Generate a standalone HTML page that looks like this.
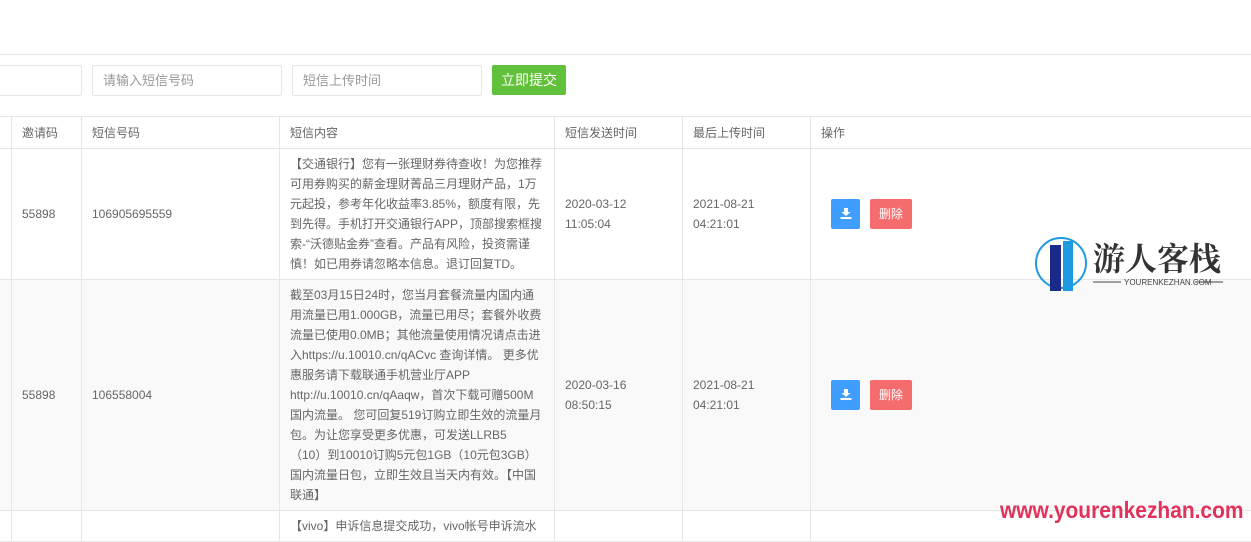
<!DOCTYPE html>
<html><head><meta charset="utf-8"><style>
body{margin:0;width:1251px;height:527px;overflow:hidden;background:#fff;font-family:"Liberation Sans","Noto Sans CJK SC",sans-serif;font-size:12px;color:#666;position:relative}
.top{position:absolute;left:0;top:54px;width:1251px;border-top:1px solid #e6e6e6}
.in{position:absolute;top:65px;border:1px solid #e6e6e6;border-radius:2px;box-sizing:border-box;height:31px;line-height:29px;padding-left:10px;color:#999;font-size:13px}
.btn{position:absolute;left:492px;top:65px;width:74px;height:30px;background:#62c13a;color:#fff;border-radius:2px;text-align:center;line-height:30px;font-size:14px}
table{position:absolute;left:-1px;top:116px;border-collapse:collapse;table-layout:fixed;width:1263px}
td{border:1px solid #e6e6e6;padding:0 10px;line-height:20px;vertical-align:middle;overflow-wrap:break-word}
td.f{padding:0}
td.c{padding:5px 8px 5px 10px}
td.n{white-space:nowrap}
tr.h td{height:31px}
tr.g td{background:#f9f9f9}
.b{display:inline-block;height:30px;border-radius:2px;color:#fff;text-align:center;line-height:30px;vertical-align:middle}
.dl{width:29px;background:#409eff;margin-left:10px}
.del{width:42px;background:#f56c6c;margin-left:10px}
.logo{position:absolute;left:1035px;top:237px}
.wm{position:absolute;left:1000px;top:497px;color:#e0325a;font-size:23px;font-weight:bold;font-family:"Liberation Sans Narrow","Liberation Sans",sans-serif;transform-origin:0 0;transform:scaleX(0.91);white-space:nowrap}
</style></head><body>
<div class="top"></div>
<div class="in" style="left:-10px;width:92px"></div>
<div class="in" style="left:92px;width:190px">请输入短信号码</div>
<div class="in" style="left:292px;width:190px">短信上传时间</div>
<div class="btn">立即提交</div>
<table>
<colgroup><col style="width:12px"><col style="width:70px"><col style="width:198px"><col style="width:275px"><col style="width:128px"><col style="width:128px"><col style="width:452px"></colgroup>
<tr class="h"><td class="f"></td><td>邀请码</td><td>短信号码</td><td>短信内容</td><td>短信发送时间</td><td>最后上传时间</td><td>操作</td></tr>
<tr><td class="f"></td><td>55898</td><td>106905695559</td><td class="c">【交通银行】您有一张理财券待查收！为您推荐可用券购买的薪金理财菁品三月理财产品，1万元起投，参考年化收益率3.85%，额度有限，先到先得。手机打开交通银行APP，顶部搜索框搜索-“沃德贴金券”查看。产品有风险，投资需谨慎！如已用券请忽略本信息。退订回复TD。</td><td>2020-03-12<br>11:05:04</td><td>2021-08-21<br>04:21:01</td><td><span class="b dl"><svg width="12" height="12" viewBox="0 0 12 12" style="vertical-align:-1px"><path d="M4 1h4v4h2.5L6 9 1.5 5H4z M0.5 10h11v2H0.5z" fill="#fff"/></svg></span><span class="b del">删除</span></td></tr>
<tr class="g"><td class="f"></td><td>55898</td><td>106558004</td><td class="c n">截至03月15日24时，您当月套餐流量内国内通<br>用流量已用1.000GB，流量已用尽；套餐外收费<br>流量已使用0.0MB；其他流量使用情况请点击进<br>入https://u.10010.cn/qACvc 查询详情。 更多优<br>惠服务请下载联通手机营业厅APP<br>http://u.10010.cn/qAaqw，首次下载可赠500M<br>国内流量。 您可回复519订购立即生效的流量月<br>包。为让您享受更多优惠，可发送LLRB5<br>（10）到10010订购5元包1GB（10元包3GB）<br>国内流量日包，立即生效且当天内有效。【中国<br>联通】</td><td>2020-03-16<br>08:50:15</td><td>2021-08-21<br>04:21:01</td><td><span class="b dl"><svg width="12" height="12" viewBox="0 0 12 12" style="vertical-align:-1px"><path d="M4 1h4v4h2.5L6 9 1.5 5H4z M0.5 10h11v2H0.5z" fill="#fff"/></svg></span><span class="b del">删除</span></td></tr>
<tr><td class="f"></td><td></td><td></td><td class="c">【vivo】申诉信息提交成功，vivo帐号申诉流水</td><td></td><td></td><td></td></tr>
</table>
<div class="logo"><svg width="190" height="54"><circle cx="26" cy="26" r="25" fill="none" stroke="#1e9be0" stroke-width="2"/><rect x="15" y="8" width="11" height="46" fill="#1b2a8a"/><rect x="28" y="4" width="10" height="50" fill="#1e9be0"/><text x="58" y="33" font-size="32" font-weight="bold" fill="#333" font-family="Noto Serif CJK SC,serif">游人客栈</text><line x1="58" y1="45" x2="86" y2="45" stroke="#444"/><text x="89" y="48" font-size="8" fill="#444">YOURENKEZHAN.COM</text><line x1="160" y1="45" x2="188" y2="45" stroke="#444"/></svg></div>
<div class="wm">www.yourenkezhan.com</div>
</body></html>
